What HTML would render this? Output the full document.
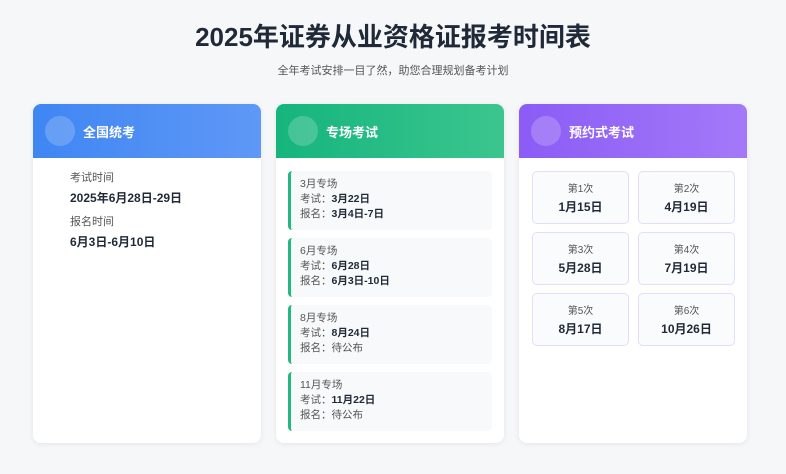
<!DOCTYPE html>
<html><head><meta charset="utf-8"><style>
*{margin:0;padding:0;box-sizing:border-box}
body{width:786px;height:474px;background:#f6f7f9;font-family:"Liberation Sans","Noto Sans CJK SC",sans-serif;position:relative;overflow:hidden;color:#1f2937}
h1{position:absolute;top:17px;left:0;width:786px;text-align:center;font-size:26px;font-weight:700;color:#1f2937}
.sub{position:absolute;top:62px;left:0;width:786px;text-align:center;font-size:11px;color:#555}
.card{position:absolute;top:104px;width:228px;height:339px;background:#fff;border-radius:8px;box-shadow:0 1px 6px rgba(0,0,0,.08);overflow:hidden}
.hd{height:54px;position:relative;color:#fff;font-size:13px;font-weight:700}
.hd .c{position:absolute;left:12px;top:12px;width:30px;height:30px;border-radius:50%;background:rgba(255,255,255,.2)}
.hd span{position:absolute;left:50px;top:18px}
.lbl{font-size:11px;color:#555;line-height:16px}
.val{font-size:12px;font-weight:700;color:#1f2937;line-height:18px}
.it{position:absolute;left:12px;width:204px;height:59px;background:#f8f9fb;border-left:3px solid #22b980;border-radius:4px;padding:6px 0 0 9px;font-size:10.5px;line-height:15px;color:#555}
.it b{color:#1f2937}
.bx{position:absolute;width:97px;height:53px;border:1px solid #e5dcfb;border-radius:5px;background:#fafbfc;text-align:center;padding-top:8px}
.bx .l{font-size:10px;color:#555}
.bx .v{font-size:12px;font-weight:700;margin-top:3px}
</style></head><body>
<h1>2025年证券从业资格证报考时间表</h1>
<div class="sub">全年考试安排一目了然，助您合理规划备考计划</div>
<div class="card" style="left:33px">
<div class="hd" style="background:linear-gradient(90deg,#3f86f3,#5f98f6)"><div class="c"></div><span>全国统考</span></div>
<div style="position:absolute;left:37px;top:66px">
<div class="lbl">考试时间</div><div class="val" style="margin-top:3px">2025年6月28日-29日</div>
<div class="lbl" style="margin-top:7px">报名时间</div><div class="val" style="margin-top:3px">6月3日-6月10日</div>
</div></div>
<div class="card" style="left:276px">
<div class="hd" style="background:linear-gradient(90deg,#15b57d,#3cc58f)"><div class="c"></div><span>专场考试</span></div>
<div class="it" style="top:67px">3月专场<br>考试：<b>3月22日</b><br>报名：<b>3月4日-7日</b></div>
<div class="it" style="top:134px">6月专场<br>考试：<b>6月28日</b><br>报名：<b>6月3日-10日</b></div>
<div class="it" style="top:201px">8月专场<br>考试：<b>8月24日</b><br>报名：待公布</div>
<div class="it" style="top:268px">11月专场<br>考试：<b>11月22日</b><br>报名：待公布</div>
</div>
<div class="card" style="left:519px">
<div class="hd" style="background:linear-gradient(90deg,#8b5cf6,#a479f8)"><div class="c"></div><span>预约式考试</span></div>
<div class="bx" style="left:13px;top:67px"><div class="l">第1次</div><div class="v">1月15日</div></div>
<div class="bx" style="left:119px;top:67px"><div class="l">第2次</div><div class="v">4月19日</div></div>
<div class="bx" style="left:13px;top:128px"><div class="l">第3次</div><div class="v">5月28日</div></div>
<div class="bx" style="left:119px;top:128px"><div class="l">第4次</div><div class="v">7月19日</div></div>
<div class="bx" style="left:13px;top:189px"><div class="l">第5次</div><div class="v">8月17日</div></div>
<div class="bx" style="left:119px;top:189px"><div class="l">第6次</div><div class="v">10月26日</div></div>
</div>
</body></html>
